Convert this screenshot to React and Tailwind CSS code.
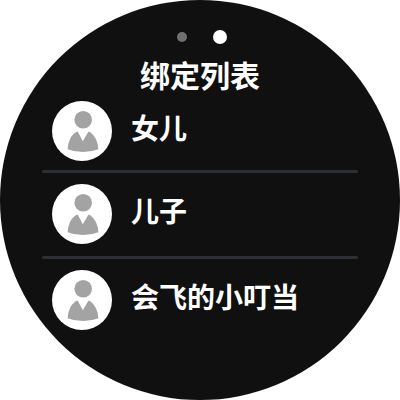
const members = ["女儿", "儿子", "会飞的小叮当"];

function Avatar() {
  return (
    <svg
      viewBox="0 0 60 60"
      className="size-[60px] shrink-0"
      aria-hidden="true"
    >
      <circle cx="30" cy="30" r="30" fill="#ffffff" />
      <g fill="#a3a3a3">
        <circle cx="31.2" cy="18.8" r="8.8" />
        <path d="M25.8 30.8 L30.8 40.2 L36.4 30.8 Q37.4 30.4 38.6 31.6 Q45.6 36.8 46.4 48.2 Q39.5 51 31 51 Q22.5 51 15.6 48.2 Q16.4 36.8 23 31.8 Q24.8 30.2 25.8 30.8 Z" />
      </g>
    </svg>
  );
}

export default function App() {
  return (
    <main className="aspect-square w-full rounded-full bg-[#101010] px-[42px] pt-[30px] font-['Noto_Sans_CJK_SC',sans-serif] text-white">
      <div className="flex items-center justify-center gap-[26px] pl-1">
        <span className="size-[10px] rounded-full bg-[#707070]" />
        <span className="size-[14px] rounded-full bg-white" />
      </div>
      <h1 className="mt-2 text-center text-[30px] leading-[44px] font-bold">
        绑定列表
      </h1>
      <ul className="mt-[5px]">
        {members.map((name) => (
          <li key={name} className="group">
            <div className="flex items-center gap-[19px] pl-[10px]">
              <Avatar />
              <span className="pb-2 text-[28px] leading-[42px] font-bold">
                {name}
              </span>
            </div>
            <hr className="mt-3 mb-[11px] h-[3px] rounded-full border-0 bg-[#2a2f38] group-first:mt-[9px] group-last:hidden" />
          </li>
        ))}
      </ul>
    </main>
  );
}
